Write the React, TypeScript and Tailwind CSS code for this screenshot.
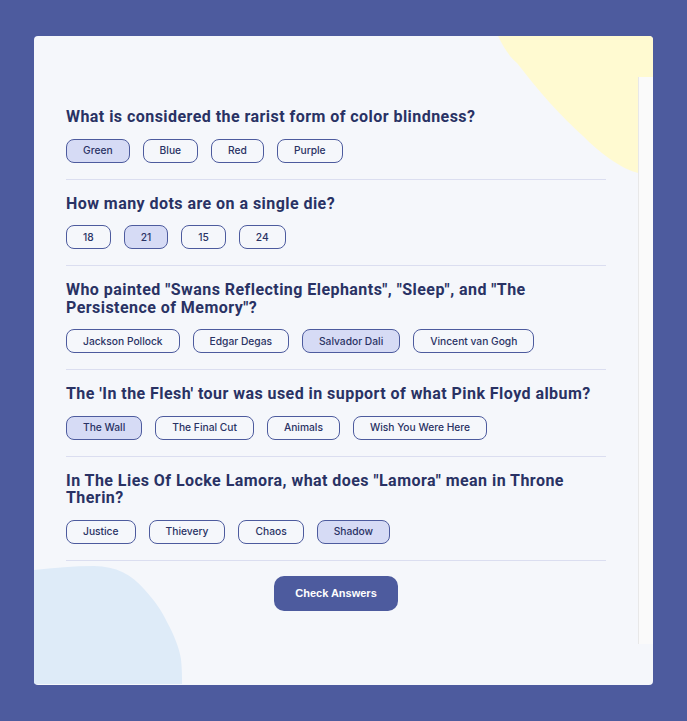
import React from "react";

const questions = [
  {
    question: "What is considered the rarist form of color blindness?",
    answers: ["Green", "Blue", "Red", "Purple"],
    selected: "Green",
  },
  {
    question: "How many dots are on a single die?",
    answers: ["18", "21", "15", "24"],
    selected: "21",
  },
  {
    question: 'Who painted "Swans Reflecting Elephants", "Sleep", and "The Persistence of Memory"?',
    answers: ["Jackson Pollock", "Edgar Degas", "Salvador Dali", "Vincent van Gogh"],
    selected: "Salvador Dali",
  },
  {
    question: "The 'In the Flesh' tour was used in support of what Pink Floyd album?",
    answers: ["The Wall", "The Final Cut", "Animals", "Wish You Were Here"],
    selected: "The Wall",
  },
  {
    question: 'In The Lies Of Locke Lamora, what does "Lamora" mean in Throne Therin?',
    answers: ["Justice", "Thievery", "Chaos", "Shadow"],
    selected: "Shadow",
  },
];

const App = () => {
  return (
    <div className="min-h-[721px] bg-[#4D5B9E] pt-[36px] pl-[34px]">
      <div className="relative w-[619px] h-[649px] bg-[#F5F7FB] rounded-[4px] overflow-hidden">
        {/* blobs */}
        <svg className="absolute top-0 right-0" width="155" height="140" viewBox="464 0 155 140">
          <path
            d="M464,0 C470,12 475,20 483,27 C495,42 505,55 516,67 C528,80 538,90 549,100 C558,109 566,116 576,123 C586,130 596,135 604,137 L619,139 L619,0 Z"
            fill="#FFFAD1"
          />
        </svg>
        <svg className="absolute bottom-0 left-0" width="150" height="120" viewBox="0 530 150 120">
          <path
            d="M0,535 C20,533 40,531 60,531 C82,531 98,540 110,554 C121,566 128,576 133,587 C140,600 145,612 147,624 C148,634 148,642 148,649 L0,649 Z"
            fill="#DEEBF8"
          />
        </svg>
        <div className="absolute right-0 top-[41px] bottom-[41px] w-[15px] bg-[#FAFAFA] border-l border-[#E8E8E8]" />

        <div className="relative w-[604px] px-[32px] pt-[72px] font-['Inter',sans-serif]">
          {questions.map((q) => (
            <div key={q.question} className="pt-[15px] first:pt-0 pb-[16px] border-b border-[#DBDEF0]">
              <h2 className="font-['Roboto',sans-serif] font-bold text-[16px] leading-[17.5px] tracking-[0.45px] text-[#293264]">
                {q.question}
              </h2>
              <div className="flex gap-[13px] mt-[13px]">
                {q.answers.map((a) => (
                  <button
                    key={a}
                    className={`h-[24px] px-[16px] rounded-[8px] border border-[#4D5B9E] text-[10.24px] font-medium text-[#293264] leading-none ${
                      a === q.selected ? "bg-[#D6DBF5]" : "bg-transparent"
                    }`}
                  >
                    {a}
                  </button>
                ))}
              </div>
            </div>
          ))}
          <div className="flex justify-center mt-[15px]">
            <button className="w-[124px] h-[35px] rounded-[10px] bg-[#4D5B9E] text-white font-['Liberation_Sans',sans-serif] font-bold text-[11px]">
              Check Answers
            </button>
          </div>
        </div>
      </div>
    </div>
  );
};

export default App;
